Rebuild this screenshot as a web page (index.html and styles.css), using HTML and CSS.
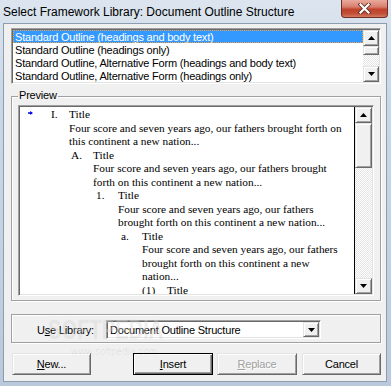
FILE: index.html
```html
<!DOCTYPE html>
<html>
<head>
<meta charset="utf-8">
<link rel="stylesheet" href="styles.css">
</head>
<body>
<div class="window">
  <div class="titlebar">
    <span class="title">Select Framework Library: Document Outline Structure</span>
    <div class="close">
      <svg width="13" height="11" viewBox="0 0 13 11"><path d="M2.5 1.5L10.5 9.5M10.5 1.5L2.5 9.5" stroke="#5a2a22" stroke-width="3.8" stroke-linecap="square"/><path d="M2.5 1.5L10.5 9.5M10.5 1.5L2.5 9.5" stroke="#fff" stroke-width="2.2" stroke-linecap="square"/></svg>
    </div>
  </div>
  <div class="client">
    <div class="listbox sunken">
      <ul class="items">
        <li class="sel">Standard Outline (headings and body text)</li>
        <li>Standard Outline (headings only)</li>
        <li>Standard Outline, Alternative Form (headings and body text)</li>
        <li>Standard Outline, Alternative Form (headings only)</li>
      </ul>
      <div class="vscroll small">
        <div class="sbtn"><svg width="7" height="4" viewBox="0 0 7 4"><path d="M3.5 0L7 4H0z"/></svg></div>
        <div class="thumb raised"></div>
        <div class="track"></div>
        <div class="sbtn"><svg width="7" height="4" viewBox="0 0 7 4"><path d="M0 0H7L3.5 4z"/></svg></div>
      </div>
    </div>

    <div class="group preview-group">
      <span class="group-label">Preview</span>
      <div class="preview sunken">
        <div class="doc">
          <div class="line"><span class="mark"><svg width="5" height="4" viewBox="0 0 5 4"><path d="M0 1.2h2.2V0L5 2 2.2 4V2.8H0z" fill="#0000e8"/></svg></span><span class="num n-I">I.</span><span>Title</span></div>
          <div class="line b1">Four score and seven years ago, our fathers brought forth on</div>
          <div class="line b1">this continent a new nation...</div>
          <div class="line"><span class="num n-A">A.</span><span>Title</span></div>
          <div class="line b2">Four score and seven years ago, our fathers brought</div>
          <div class="line b2">forth on this continent a new nation...</div>
          <div class="line"><span class="num n-1">1.</span><span>Title</span></div>
          <div class="line b3">Four score and seven years ago, our fathers</div>
          <div class="line b3">brought forth on this continent a new nation...</div>
          <div class="line"><span class="num n-a">a.</span><span>Title</span></div>
          <div class="line b4">Four score and seven years ago, our fathers</div>
          <div class="line b4">brought forth on this continent a new</div>
          <div class="line b4">nation...</div>
          <div class="line"><span class="num n-p">(1)</span><span>Title</span></div>
        </div>
        <div class="vscroll big">
          <div class="sbtn"><svg width="7" height="4" viewBox="0 0 7 4"><path d="M3.5 0L7 4H0z"/></svg></div>
          <div class="thumb big-thumb raised"></div>
          <div class="track"></div>
          <div class="sbtn"><svg width="7" height="4" viewBox="0 0 7 4"><path d="M0 0H7L3.5 4z"/></svg></div>
        </div>
      </div>
    </div>

    <div class="group lib-group">
      <span class="lib-label">U<u>s</u>e Library:</span>
      <div class="combo sunken">
        <span class="combo-text">Document Outline Structure</span>
        <div class="sbtn drop"><svg width="7" height="4" viewBox="0 0 7 4"><path d="M0 0H7L3.5 4z"/></svg></div>
      </div>
    </div>

    <div class="buttons">
      <div class="btn raised new"><u>N</u>ew...</div>
      <div class="btn default insert"><u>I</u>nsert</div>
      <div class="btn raised replace disabled"><u>R</u>eplace</div>
      <div class="btn raised cancel">Cancel</div>
    </div>

    <div class="watermark">SOFTPEDIA<sup>™</sup></div>
    <div class="watermark-url">www.softpedia.com</div>
  </div>
</div>
</body>
</html>
```

FILE: styles.css
```css
html, body {
  margin: 0;
  padding: 0;
}
body {
  width: 391px;
  height: 386px;
  overflow: hidden;
  font-family: "Liberation Sans", Arial, sans-serif;
  color: #000;
}
.window {
  width: 391px;
  height: 386px;
  display: flex;
  flex-direction: column;
  background: linear-gradient(180deg, #dce5ef 0%, #cad7e6 25%, #c2d0e1 70%, #b9c8da 100%);
}
.titlebar {
  height: 23px;
  flex: none;
  display: flex;
  justify-content: space-between;
  align-items: flex-start;
}
.title {
  font-size: 12px;
  line-height: 23px;
  padding: 1px 0 0 3px;
  white-space: nowrap;
}
.close {
  width: 47px;
  height: 18px;
  margin-right: 3px;
  box-sizing: border-box;
  border: 1px solid #6e3128;
  border-top: none;
  border-radius: 0 0 4px 4px;
  background: linear-gradient(180deg, #e9aa9b 0%, #d9806f 40%, #c0422c 55%, #c24f38 80%, #d57a62 100%);
  display: flex;
  align-items: center;
  justify-content: center;
}
.client {
  position: relative;
  flex: 1;
  margin: 0 4px 4px 3px;
  border: 1px solid #8c9cb1;
  background: #f0f0f0;
  padding: 4px 5px 6px 7px;
  display: flex;
  flex-direction: column;
  font-size: 11px;
  letter-spacing: -0.2px;
}

/* 3D borders */
.sunken {
  box-sizing: border-box;
  border: 1px solid;
  border-color: #a0a0a0 #ffffff #ffffff #a0a0a0;
  box-shadow: inset 1px 1px 0 #696969, inset -1px -1px 0 #e3e3e3;
  padding: 1px;
  background: #fff;
}
.raised, .sbtn {
  box-sizing: border-box;
  border: 1px solid;
  border-color: #e3e3e3 #696969 #696969 #e3e3e3;
  box-shadow: inset 1px 1px 0 #ffffff, inset -1px -1px 0 #a0a0a0;
  background: #f0f0f0;
}

/* list box */
.listbox {
  height: 56px;
  flex: none;
  display: flex;
}
.items {
  flex: 1;
  list-style: none;
  margin: 0;
  padding: 0;
}
.items li {
  height: 12px;
  padding: 1px 0 0 2px;
  line-height: 13px;
  white-space: nowrap;
}
.items li.sel {
  background: #3399ff;
  color: #fff;
  outline: 1px dotted #f4a040;
  outline-offset: -1px;
}

/* scrollbars */
.vscroll {
  display: flex;
  flex-direction: column;
  flex: none;
}
.vscroll.small {
  width: 16px;
}
.vscroll.big {
  width: 17px;
  border-left: 1px solid #000;
}
.sbtn {
  height: 16px;
  flex: none;
  display: flex;
  align-items: center;
  justify-content: center;
}
.thumb {
  height: 9px;
  flex: none;
}
.thumb.big-thumb {
  height: 45px;
}
.track {
  flex: 1;
  background: repeating-conic-gradient(#ffffff 0 25%, #e4e4e4 0 50%) 0 0 / 2px 2px;
}

/* group boxes */
.group {
  position: relative;
  flex: none;
  border: 1px solid #a0a0a0;
  box-shadow: inset 1px 1px 0 #fff, 1px 1px 0 #fff;
}
.group-label {
  position: absolute;
  top: -8px;
  left: 6px;
  padding: 0 1px;
  line-height: 13px;
  background: #f0f0f0;
}
.preview-group {
  margin-top: 12px;
  padding: 8px 6px 4px 6px;
}
.preview {
  height: 191px;
  display: flex;
}
.doc {
  flex: 1;
  padding-top: 1px;
  overflow: hidden;
  font-family: "Liberation Serif", "Times New Roman", serif;
  font-size: 11.3px;
  letter-spacing: 0;
}
.line {
  height: 13.5px;
  line-height: 13.5px;
  white-space: nowrap;
  display: flex;
  align-items: baseline;
}
.mark {
  align-self: flex-start;
  margin: 3px 0 0 8px;
  width: 23px;
  height: 4px;
  display: flex;
}
.num {
  flex: none;
}
.n-I { width: 18px; }
.n-A { margin-left: 51px; width: 22px; }
.n-1 { margin-left: 76px; width: 22px; }
.n-a { margin-left: 101px; width: 21px; }
.n-p { margin-left: 122px; width: 25px; }
.b1 { padding-left: 49px; }
.b2 { padding-left: 73px; }
.b3 { padding-left: 98px; }
.b4 { padding-left: 122px; }

/* library group */
.lib-group {
  margin-top: 13px;
  padding: 5px 0 3px 25px;
  display: flex;
  align-items: center;
}
.lib-label {
  width: 69px;
  flex: none;
  line-height: 13px;
  padding-top: 1px;
}
.combo {
  width: 215px;
  height: 19px;
  display: flex;
}
.combo-text {
  flex: 1;
  padding: 1px 0 0 2px;
  line-height: 14px;
  white-space: nowrap;
}
.sbtn.drop {
  width: 16px;
  height: 15px;
}

/* buttons */
.buttons {
  margin-top: 10px;
  display: flex;
  padding-left: 1px;
}
.btn {
  width: 80px;
  height: 22px;
  box-sizing: border-box;
  text-align: center;
  line-height: 20px;
  flex: none;
}
.btn.new {
  width: 79px;
  margin-right: 42px;
}
.btn.default {
  border: 1px solid #000;
  background: #f0f0f0;
  box-shadow: inset 1px 1px 0 #ffffff, inset -1px -1px 0 #696969, inset -2px -2px 0 #a0a0a0;
}
.btn.replace {
  margin-left: 4px;
}
.btn.cancel {
  width: 79px;
  margin-left: 5px;
}
.btn.disabled {
  color: #a0a0a0;
  text-shadow: 1px 1px 0 #fff;
}

/* watermark (faint, lies over the dialog like in the screenshot) */
.watermark {
  position: absolute;
  left: 44px;
  top: 290px;
  font-size: 28px;
  font-weight: bold;
  letter-spacing: 0;
  color: rgba(255, 255, 255, 0.3);
  text-shadow: 0 0 1px rgba(0, 0, 0, 0.1);
  transform: scaleX(0.72);
  transform-origin: left top;
  pointer-events: none;
  white-space: nowrap;
}
.watermark sup {
  font-size: 8px;
}
.watermark-url {
  position: absolute;
  left: 67px;
  top: 322px;
  font-size: 10px;
  letter-spacing: 0;
  color: rgba(0, 0, 0, 0.08);
  pointer-events: none;
  white-space: nowrap;
}
```
